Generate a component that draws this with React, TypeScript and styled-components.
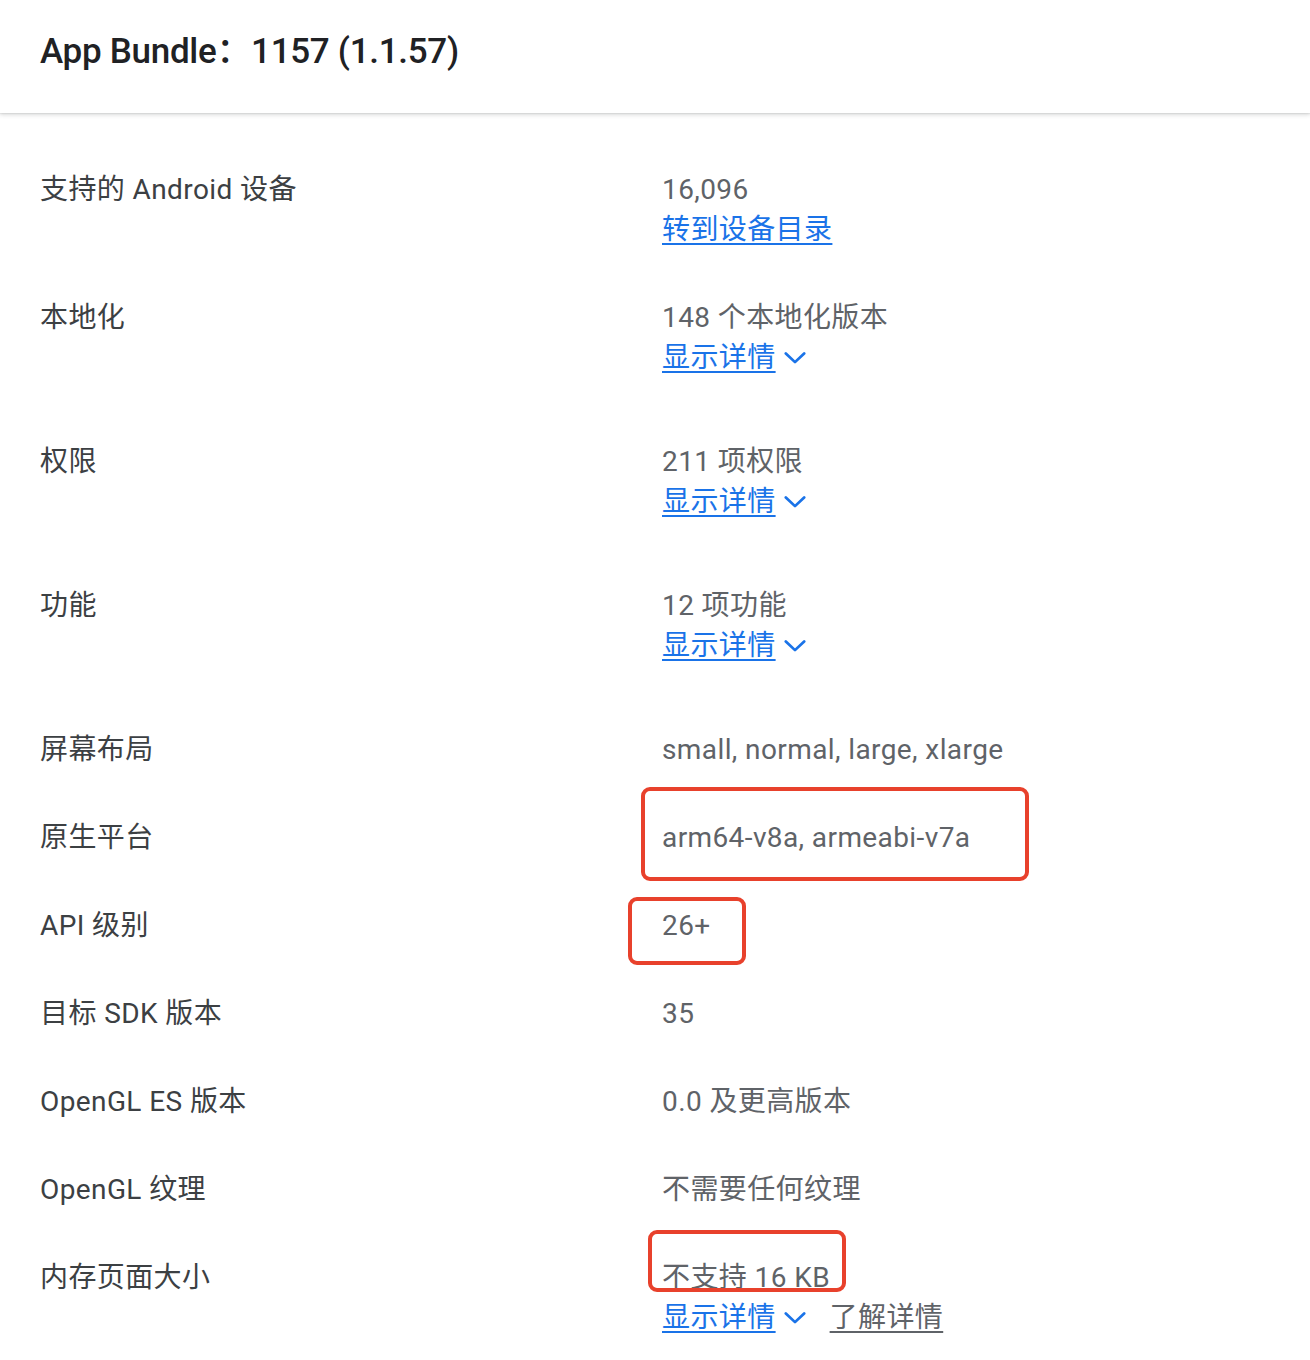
import React from 'react';
import styled, { createGlobalStyle } from 'styled-components';

const GlobalStyle = createGlobalStyle`
  html, body {
    margin: 0;
    padding: 0;
    background: #ffffff;
  }
  body {
    font-family: Roboto, "Noto Sans CJK SC", "Noto Sans", sans-serif;
    -webkit-font-smoothing: antialiased;
  }
`;

type Mark = { top: number; left: number; w: number; h: number };

type Row = {
  label: string;
  value: string;
  link?: 'catalog' | 'details' | 'details-learn';
  mark?: Mark;
};

const rows: Row[] = [
  { label: '支持的 Android 设备', value: '16,096', link: 'catalog' },
  { label: '本地化', value: '148 个本地化版本', link: 'details' },
  { label: '权限', value: '211 项权限', link: 'details' },
  { label: '功能', value: '12 项功能', link: 'details' },
  { label: '屏幕布局', value: 'small, normal, large, xlarge' },
  { label: '原生平台', value: 'arm64-v8a, armeabi-v7a', mark: { top: -31, left: -21, w: 388, h: 94 } },
  { label: 'API 级别', value: '26+', mark: { top: -9, left: -34, w: 118, h: 68 } },
  { label: '目标 SDK 版本', value: '35' },
  { label: 'OpenGL ES 版本', value: '0.0 及更高版本' },
  { label: 'OpenGL 纹理', value: '不需要任何纹理' },
  { label: '内存页面大小', value: '不支持 16 KB', link: 'details-learn', mark: { top: -28, left: -14, w: 198, h: 62 } },
];

function Chevron() {
  return (
    <ChevronIcon viewBox="0 0 24 14" aria-hidden>
      <path d="M2 2 L12 11.5 L22 2" fill="none" stroke="currentColor" strokeWidth="3" strokeLinecap="round" strokeLinejoin="round" />
    </ChevronIcon>
  );
}

export default function App() {
  return (
    <>
      <GlobalStyle />
      <Page>
        <Header>
          <Title>App Bundle：1157 (1.1.57)</Title>
        </Header>
        <List>
          {rows.map((r) => (
            <RowWrap key={r.label}>
              <Label>{r.label}</Label>
              <ValueCell>
                <Value>{r.value}</Value>
                {r.link === 'catalog' && (
                  <LinkLine>
                    <BlueLink href="#">转到设备目录</BlueLink>
                  </LinkLine>
                )}
                {(r.link === 'details' || r.link === 'details-learn') && (
                  <LinkLine $tall>
                    <BlueLink href="#">显示详情</BlueLink>
                    <Chevron />
                    {r.link === 'details-learn' && <GrayLink href="#">了解详情</GrayLink>}
                  </LinkLine>
                )}
                {r.mark && <Highlight $m={r.mark} />}
              </ValueCell>
            </RowWrap>
          ))}
        </List>
      </Page>
    </>
  );
}

const Page = styled.div`
  width: 1310px;
  min-height: 1360px;
  background: #fff;
`;

const Header = styled.header`
  height: 113px;
  display: flex;
  align-items: center;
  padding: 0 40px;
  box-sizing: border-box;
  box-shadow: 0 2px 4px rgba(60, 64, 67, 0.18), 0 1px 1px rgba(60, 64, 67, 0.08);
  position: relative;
  z-index: 1;
`;

const Title = styled.h1`
  margin: 0;
  padding: 0 0 18px;
  font-size: 35px;
  font-weight: 500;
  color: #202124;
  letter-spacing: -0.3px;
`;

const List = styled.div`
  padding-top: 57px;
`;

const RowWrap = styled.div`
  display: grid;
  grid-template-columns: 622px 1fr;
  padding: 0 40px 48px;
  font-size: 28px;
  letter-spacing: 0.4px;
`;

const Label = styled.div`
  line-height: 40px;
  color: #3c4043;
`;

const ValueCell = styled.div`
  position: relative;
  display: flex;
  flex-direction: column;
  align-items: flex-start;
`;

const Value = styled.div`
  line-height: 40px;
  color: #5f6368;
`;

const LinkLine = styled.div<{ $tall?: boolean }>`
  display: flex;
  align-items: center;
  height: 40px;
  margin-bottom: ${(p) => (p.$tall ? 16 : 0)}px;
`;

const BlueLink = styled.a`
  color: #1a73e8;
  text-decoration: underline;
  text-underline-offset: 4px;
  text-decoration-thickness: 2px;
  line-height: 40px;
`;

const GrayLink = styled.a`
  color: #5f6368;
  text-decoration: underline;
  text-underline-offset: 4px;
  text-decoration-thickness: 2px;
  line-height: 40px;
  margin-left: 24px;
`;

const ChevronIcon = styled.svg`
  width: 22px;
  height: 14px;
  margin-left: 8px;
  color: #1a73e8;
`;

const Highlight = styled.div<{ $m: Mark }>`
  position: absolute;
  top: ${(p) => p.$m.top}px;
  left: ${(p) => p.$m.left}px;
  width: ${(p) => p.$m.w}px;
  height: ${(p) => p.$m.h}px;
  box-sizing: border-box;
  border: 4px solid #e8412c;
  border-radius: 9px;
  pointer-events: none;
`;
